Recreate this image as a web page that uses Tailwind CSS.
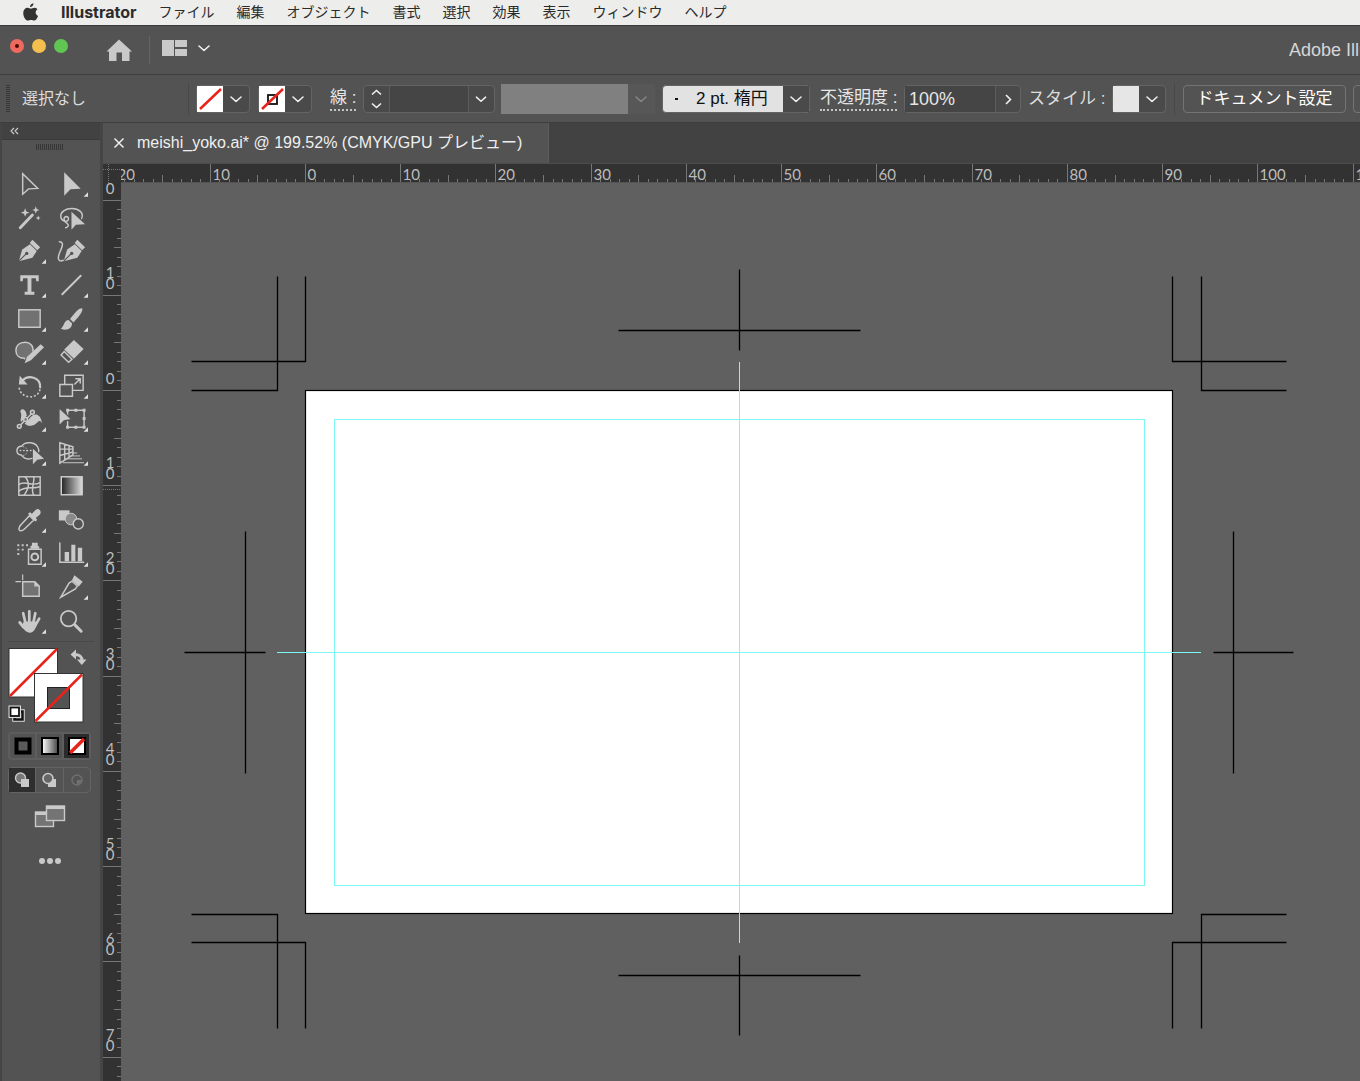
<!DOCTYPE html>
<html lang="ja">
<head>
<meta charset="utf-8">
<title>meishi_yoko.ai</title>
<script src="https://cdn.jsdelivr.net/npm/@tailwindcss/browser@4"></script>
</head>
<body class="h-screen flex flex-col overflow-hidden bg-[#535353] font-['Liberation_Sans','Noto_Sans_CJK_JP',sans-serif] text-[#e6e6e6]">

<svg class="absolute size-0" aria-hidden="true">
  <defs>
    <symbol id="chev" viewBox="0 0 26 26"><path d="M8 11l5 4.500l5-4.500" fill="none" stroke="#f0f0f0" stroke-width="1.600" stroke-linecap="round" stroke-linejoin="round"/></symbol>
    <symbol id="pen" viewBox="0 0 42 34" overflow="visible">
      <path d="M10.500 27L14 15L22 9.500L29 16.500L24.500 23.500Z" fill="#c9c9c9"/>
      <path d="M24.500 5L32.500 12.500L29.500 15.800L21.800 8.200Z" fill="#c9c9c9"/>
      <path d="M10.500 27L18 19.500" stroke="#535353" stroke-width="1.200"/>
      <circle cx="18.700" cy="19" r="1.700" fill="#535353"/>
    </symbol>
    <linearGradient id="gr"><stop offset="0" stop-color="#222"/><stop offset="1" stop-color="#ddd"/></linearGradient>
    <linearGradient id="gw"><stop offset="0" stop-color="#fff"/><stop offset="1" stop-color="#444"/></linearGradient>
  </defs>
</svg>

<!-- macOS menu bar -->
<nav class="flex h-[26px] shrink-0 items-center border-b border-[#3a3a3a] bg-[#ededeb] pb-0.5 pl-[22px] text-sm text-[#2b2b2b]">
  <button aria-label="Apple" class="mr-[22px]"><svg width="17" height="20" viewBox="0 0 17 20" class="block">
    <path d="M11.500 1.200C11.600 3.400 9.800 5.200 8 5.100C7.800 3.200 9.500 1.300 11.500 1.200Z" fill="#333"/>
    <path d="M15.500 7.300C12.800 9 13.200 12.700 16 13.900C15.200 16.300 13.700 18.600 12.200 18.600C11 18.600 10.500 17.900 9 17.900S7 18.600 5.900 18.600C3.700 18.600 1.300 14.900 1.300 11.200C1.300 7.800 3.400 5.800 5.600 5.800C7 5.800 8 6.700 8.900 6.700S11.200 5.600 12.900 5.700C13.900 5.800 14.900 6.300 15.500 7.300Z" fill="#333"/></svg></button>
  <div class="flex items-center gap-[22px] whitespace-nowrap">
    <button class="font-['Inter'] text-base leading-5 font-bold">Illustrator</button>
    <button>ファイル</button><button>編集</button><button>オブジェクト</button><button>書式</button><button>選択</button><button>効果</button><button>表示</button><button>ウィンドウ</button><button>ヘルプ</button>
  </div>
</nav>

<!-- Title bar -->
<header class="flex h-[49px] shrink-0 items-center border-b border-[#3e3e3e] pl-2.5">
  <div class="flex gap-2 pb-2">
    <button aria-label="閉じる" class="grid size-[14px] place-items-center rounded-full bg-[#ee6a5f]"><span class="size-1 rounded-full bg-[#4b0a06]"></span></button>
    <button aria-label="しまう" class="size-[14px] rounded-full bg-[#f5bf4f]"></button>
    <button aria-label="拡大" class="size-[14px] rounded-full bg-[#61c554]"></button>
  </div>
  <button aria-label="ホーム" class="ml-[38px]"><svg width="26" height="24" viewBox="0 0 26 24" class="block"><path d="M13 1.500L26 13.500H23.500V23H16V14.500H10.500V23H3V13.500H0.500Z" fill="#c9c9c9"/></svg></button>
  <div class="ml-[17px] h-7 w-px bg-[#656565]"></div>
  <button aria-label="ワークスペース" class="ml-3 flex items-center pb-1">
    <svg width="25" height="16" viewBox="0 0 25 16"><path d="M0 0H12V16H0ZM13 0H25V7H13ZM13 9H25V16H13Z" fill="#c9c9c9"/></svg>
    <svg width="26" height="26" class="ml-1"><use href="#chev"/></svg>
  </button>
  <div class="ml-auto w-[71px] overflow-hidden text-lg whitespace-nowrap text-[#d6d6d6]">Adobe Illustrator</div>
</header>

<!-- Control bar -->
<section class="flex h-12 shrink-0 items-center overflow-hidden border-b border-[#3e3e3e] pl-1.5 text-[17px] whitespace-nowrap [&>*]:shrink-0">
  <div class="h-7 w-1 bg-[repeating-linear-gradient(#363636_0_1px,#535353_1px_2px)]"></div>
  <div class="ml-3 w-[166px] text-base text-[#dcdcdc]">選択なし</div>
  <div class="h-8 w-px bg-[#484848]"></div>
  <button aria-label="塗り" class="ml-[7px] flex h-7 w-[54px] rounded-sm border border-[#646464] bg-[#4a4a4a]"><svg width="26" height="26" class="bg-white"><path d="M3 23L24 3" stroke="#e8231a" stroke-width="2.500"/></svg><svg width="26" height="26"><use href="#chev"/></svg></button>
  <button aria-label="線の色" class="ml-2 flex h-7 w-[54px] rounded-sm border border-[#646464] bg-[#4a4a4a]"><svg width="26" height="26" class="bg-white"><rect x="9" y="9" width="9" height="9" fill="none" stroke="#111" stroke-width="1.800"/><path d="M3 23L24 3" stroke="#e8231a" stroke-width="2.500"/></svg><svg width="26" height="26"><use href="#chev"/></svg></button>
  <label for="weight" class="ml-[18px] w-[26px] border-b-2 border-dotted border-[#c4c4c4] leading-[22px]">線 :</label>
  <div class="ml-[7px] flex h-7 w-[132px] rounded border border-[#646464] bg-[#4a4a4a]">
    <button aria-label="線幅を増減" class="w-[25px]"><svg width="25" height="26"><path d="M8 8.500L12.500 4.500L17 8.500M8 17.500L12.500 21.500L17 17.500" fill="none" stroke="#f0f0f0" stroke-width="1.600"/></svg></button>
    <input id="weight" class="w-20 border-x border-[#5c5c5c] bg-[#454545] px-1 outline-none">
    <button aria-label="線幅の一覧"><svg width="24" height="26"><use href="#chev"/></svg></button>
  </div>
  <button aria-label="可変線幅プロファイル" disabled class="ml-1.5 flex h-[30px] w-[154px] items-center bg-[#575757]"><span class="h-full w-[127px] bg-[#808080]"></span><svg width="26" height="26" class="opacity-30"><use href="#chev"/></svg></button>
  <div class="relative ml-[7px] h-7 w-[148px]">
    <select aria-label="ブラシ定義" class="h-7 w-full appearance-none rounded-sm border border-[#646464] bg-[#e2e2e2] pl-[33px] text-[17px] text-[#111] outline-none"><option>2 pt. 楕円</option></select>
    <span class="absolute top-[13px] left-[13px] h-0.5 w-[3px] bg-[#111]"></span>
    <svg class="pointer-events-none absolute top-px right-px bg-[#4a4a4a]" width="26" height="26"><use href="#chev"/></svg>
  </div>
  <label for="opacity" class="ml-2.5 w-[77px] border-b-2 border-dotted border-[#c4c4c4] leading-[22px]">不透明度 :</label>
  <div class="ml-[7px] flex h-7 w-[117px] rounded-sm border border-[#646464] bg-[#4a4a4a]">
    <input id="opacity" value="100%" class="w-[91px] border-r border-[#5c5c5c] bg-[#454545] px-1 text-lg outline-none">
    <button aria-label="不透明度スライダー"><svg width="25" height="26"><path d="M10 9L14.500 13.500L10 18" fill="none" stroke="#f0f0f0" stroke-width="1.600"/></svg></button>
  </div>
  <div class="ml-[7px] w-[77px] text-[#dcdcdc]">スタイル :</div>
  <button aria-label="スタイル" class="ml-[7px] flex h-7 w-[54px] rounded-sm border border-[#646464] bg-[#4a4a4a]"><span class="size-[26px] bg-[#e6e6e6]"></span><svg width="26" height="26"><use href="#chev"/></svg></button>
  <div class="ml-2 h-8 w-px bg-[#484848]"></div>
  <button class="ml-2 h-7 w-[163px] rounded border border-[#747474] leading-6 text-white">ドキュメント設定</button>
  <button aria-label="環境設定" class="ml-[7px] h-7 w-24 rounded border border-[#747474]"></button>
</section>

<main class="flex min-h-0 flex-1">
  <!-- Tools panel -->
  <aside class="flex w-[103px] shrink-0 flex-col border-x-2 border-r-3 border-[#454545]">
    <div class="flex h-[17px] items-center border-b border-[#3b3b3b] bg-[#424242] pl-2">
      <button aria-label="折りたたむ"><svg width="9" height="8" class="block"><path d="M4 1L1 4L4 7M8 1L5 4L8 7" fill="none" stroke="#cfcfcf" stroke-width="1.100"/></svg></button>
    </div>
    <div class="mt-1 ml-[34px] h-1.5 w-7 bg-[repeating-linear-gradient(90deg,#363636_0_1px,#535353_1px_2px)]"></div>
    <div id="tools" class="mt-[18px] ml-1.5 grid h-[470px] w-[84px] shrink-0 grid-cols-2 grid-rows-14"></div>
    <div class="mx-1.5 mt-[3px] h-px shrink-0 bg-[#494949]"></div>
    <svg class="shrink-0" width="98" height="90" viewBox="2 642 98 90">
      <rect x="9" y="648.500" width="48.500" height="48.500" fill="#fff" stroke="#333"/>
      <path d="M10 696L57 649" stroke="#e8231a" stroke-width="2.500"/>
      <rect x="34.500" y="673.500" width="48.500" height="48.500" fill="#fff" stroke="#333"/>
      <rect x="47.500" y="687.500" width="22" height="21" fill="#535353" stroke="#222"/>
      <path d="M35.500 721L82 674.500" stroke="#e8231a" stroke-width="2.500"/>
      <path d="M74 654.500C79.500 654.500 82 656 82 661" fill="none" stroke="#c9c9c9" stroke-width="3"/>
      <path d="M76 649.500V659.500L70.500 654.500ZM77 659.500H86.500L81.800 665Z" fill="#c9c9c9"/>
      <rect x="14.500" y="711.500" width="8" height="8" fill="none" stroke="#ddd" stroke-width="4.500"/><rect x="14.500" y="711.500" width="8" height="8" fill="none" stroke="#111" stroke-width="2.500"/>
      <rect x="10.500" y="707.500" width="8.500" height="8.500" fill="#fff" stroke="#ddd" stroke-width="4"/><rect x="10.500" y="707.500" width="8.500" height="8.500" fill="#fff" stroke="#111" stroke-width="1.800"/>
    </svg>
    <div class="ml-1.5 flex h-7 w-[83px] shrink-0 rounded border-2 border-[#5d5d5d]">
      <button aria-label="カラー" class="grid flex-1 place-items-center border-r-2 border-[#5d5d5d]"><svg width="18" height="18"><rect x="2.500" y="2.500" width="13" height="13" fill="#5a5a5a" stroke="#000" stroke-width="4"/></svg></button>
      <button aria-label="グラデーション" class="grid flex-1 place-items-center border-r-2 border-[#5d5d5d]"><svg width="18" height="18"><rect x="1" y="1" width="16" height="16" fill="url(#gw)" stroke="#000" stroke-width="2"/></svg></button>
      <button aria-label="なし" class="grid flex-1 place-items-center bg-[#2b2b2b]"><svg width="18" height="18"><rect x="1" y="1" width="16" height="16" fill="#fff" stroke="#000" stroke-width="2"/><path d="M2 16L16 2" stroke="#e8231a" stroke-width="3.500"/></svg></button>
    </div>
    <div class="mt-[7px] ml-1.5 flex h-[26px] w-[83px] shrink-0 rounded border border-[#646464]">
      <button aria-label="標準描画" class="grid flex-1 place-items-center bg-[#2e2e2e]"><svg width="16" height="16"><circle cx="6.500" cy="6" r="5" fill="#777" stroke="#c9c9c9" stroke-width="1.400"/><rect x="7" y="7" width="8" height="8" fill="#c9c9c9"/></svg></button>
      <button aria-label="背面描画" class="grid flex-1 place-items-center border-x border-[#646464]"><svg width="16" height="16"><rect x="7" y="7" width="8" height="8" fill="#c9c9c9"/><circle cx="7" cy="6.500" r="5" fill="#666" stroke="#c9c9c9" stroke-width="1.600"/></svg></button>
      <button aria-label="内側描画" class="grid flex-1 place-items-center"><svg width="16" height="16"><circle cx="8" cy="8" r="5" fill="none" stroke="#707070" stroke-width="1.400"/><path d="M8 8H12.500A5 5 0 0 1 8 12.500Z" fill="#707070"/></svg></button>
    </div>
    <button aria-label="スクリーンモード" class="mt-[11px] ml-8 w-8 shrink-0"><svg width="32" height="25" class="block"><g fill="#747474" stroke="#c9c9c9" stroke-width="1.400"><rect x="1.500" y="8" width="18" height="14.500"/><path d="M1.500 9.500H19.500" stroke-width="3"/><rect x="12.500" y="2" width="18" height="14.500"/><path d="M12.500 3.500H30.500" stroke-width="3"/></g></svg></button>
    <button aria-label="ツールバーを編集" class="mt-7 ml-9 flex shrink-0 gap-0.5 p-px"><span class="size-[6px] rounded-full bg-[#c9c9c9]"></span><span class="size-[6px] rounded-full bg-[#c9c9c9]"></span><span class="size-[6px] rounded-full bg-[#c9c9c9]"></span></button>
  </aside>

  <!-- Document window -->
  <section class="flex min-w-0 flex-1 flex-col">
    <div class="flex h-10 shrink-0 bg-[#424242]">
      <div class="flex w-[446px] items-center gap-3 border-r border-[#5c5c5c] bg-[#535353] pl-2.5 text-base whitespace-nowrap text-[#efefef]">
        <button aria-label="タブを閉じる"><svg width="12" height="12" class="block"><path d="M1.500 1.500L10.500 10.500M10.500 1.500L1.500 10.500" stroke="#efefef" stroke-width="1.500"/></svg></button>
        <span>meishi_yoko.ai* @ 199.52% (CMYK/GPU プレビュー)</span>
      </div>
    </div>
    <div class="grid min-h-0 flex-1 grid-cols-[18px_1fr] grid-rows-[19px_1fr] border-t border-[#4c4c4c] bg-[#323232] font-['Lato'] text-[15px]">
      <svg class="h-full w-full"><path d="M0 5.500H18M5.500 0V19" stroke="#777" stroke-dasharray="1 1"/></svg>
      <svg id="hr" class="h-full w-full overflow-hidden border-b border-[#555]"></svg>
      <svg id="vr" class="h-full w-full overflow-hidden"></svg>
      <svg class="h-full w-full overflow-hidden bg-[#606060]" role="img" aria-label="名刺アートボード">
        <g transform="translate(184.500 207.500)" fill="none">
          <rect x="0" y="0" width="867" height="523" fill="#fff" stroke="#000" stroke-width="1.200"/>
          <g stroke="#000" stroke-width="1.300">
            <path d="M-28-114V0H-114M0-114V-29H-114"/>
            <path d="M896-114V0H981M867-114V-29H981"/>
            <path d="M-28 638V524H-114M0 638V552H-114"/>
            <path d="M896 638V524H981M867 638V552H981"/>
            <path d="M434-121V-40M313-60H555M434 565V645M313 585H555"/>
            <path d="M-60 141V383M-121 262H-40M928 141V383M908 262H988"/>
          </g>
          <rect x="29" y="29" width="810" height="466" stroke="#7df7f4"/>
          <rect x="433.500" y="-28.500" width="1" height="581" fill="#7df7f4"/>
          <rect x="-28.500" y="261.500" width="924" height="1" fill="#7df7f4"/>
        </g>
      </svg>
    </div>
  </section>
</main>

<script>
// Tool icons: [label, has flyout triangle, artwork in a 42x34 cell]
const tools = [
['選択',0,'<path d="M14.500 6V27L20.500 21.500L30 21Z" class="o"/>'],
['ダイレクト選択',1,'<path d="M14 4.500V28.500L20.500 22L31 21.500Z" class="f"/>'],
['自動選択',0,'<path d="M12 26.500L24.500 13.500" class="o" stroke-width="3"/><path d="M17 6.500L18.300 9.800L21.500 11L18.300 12L17 15.300L15.800 12L12.500 11L15.800 9.800ZM28 4.500L29 7.200L31.700 8.300L29 9.300L28 12L27 9.300L24.500 8.300L27 7.200ZM30.500 14L31.200 15.800L33 16.500L31.200 17.200L30.500 19L29.800 17.200L28 16.500L29.800 15.800Z" class="f"/>'],
['なげなわ',0,'<path d="M32 17C34.500 11 29 6.800 22 6.800C15 6.800 10 10.500 10.500 15C10.800 18 13 19.500 15.500 19.800C19 20 19.500 15 16 15C13 15.500 13 20 17 22C19 23.500 18.500 26 15.500 26.500" class="o"/><path d="M21.500 10V28.500L26 23.500L35.500 23Z" class="f"/>'],
['ペン',1,'<use href="#pen"/>'],
['曲線',0,'<use href="#pen" x="3"/><path d="M9 7C15 7 11 14 9 19C7 24 8 28.500 13 26" class="o"/>'],
['文字',1,'<path d="M12 6.500H31V12.500H28.500L28 9.500H23.500V23.500H26.500V26.500H16.500V23.500H19.500V9.500H15L14.500 12.500H12Z" class="f"/>'],
['直線',1,'<path d="M12 26L31 7" class="o" stroke-width="2"/>'],
['長方形',1,'<rect x="10.500" y="7" width="22" height="18" class="g"/>'],
['ブラシ',1,'<path d="M32.500 5.500C30 5 27 7.500 20 16.500L23.500 20C31 12.500 33.500 8 32.500 5.500ZM18.500 17.500C14 17.500 14.500 23 10.500 26.500C16 29 22.500 26.500 22 20.800Z" class="f"/>'],
['ブロブブラシ',1,'<path d="M25 16C26 10 22 6.500 17 6.500C11 6.500 7.500 10 7.500 15C7.500 20 11 23 16 23L17 24" class="g"/><path d="M33 8.500L36.500 11.500L23 25L16.500 28L19 21.500Z" class="f"/>'],
['消しゴム',1,'<path d="M24 4L34 13.500L24 23.500L14 14Z" class="f"/><path d="M14 16L22 24L18.500 27L10.800 19.500Z" class="o"/>'],
['回転',1,'<path d="M14 11C20 4.500 33 7 32.500 18" class="o" stroke-width="2.200"/><path d="M11.500 6L10.500 15H19.500Z" class="f"/><path d="M11 19C13 30 31 31 32.500 19" class="o" stroke-dasharray="0.500 3.500" stroke-width="1.800"/>'],
['拡大・縮小',1,'<path d="M14.500 15V5.500H33.500V21H23M9.500 15H22.500V27H9.500Z" class="o"/><path d="M25 14.500L30 9.500M26 9H30.500V13.500" class="o"/>'],
['線幅',1,'<path d="M12 8.500C13 5 17 6 18 10C19 14 20 16 23 14C27 10 33 11 34.500 21C31 15 30 22 25 23C19 25 18 21 14 20C10 19 15 14 12 8.500Z" class="f"/><path d="M12 23.500L24.500 9.500" stroke="#535353" stroke-width="4"/><path d="M12 23L24.500 10" class="o"/><g class="g"><circle cx="11" cy="24" r="2"/><circle cx="24.500" cy="9.500" r="2"/><circle cx="17.500" cy="17" r="2"/></g>'],
['自由変形',1,'<rect x="17.500" y="7.500" width="17" height="17.500" class="o"/><path d="M16 6h3v3h-3zM24.500 6h3v3h-3zM33 6h3v3h-3zM33 14.500h3v3h-3zM33 23.500h3v3h-3zM24.500 23.500h3v3h-3zM16 23.500h3v3h-3z" class="f"/><path d="M8.500 4.500V24L14 18.500L22 17Z" class="f" stroke="#535353"/>'],
['シェイプ形成',1,'<path d="M24 22C17 24 14 20 13 18.500C6.500 18.500 7.500 9 13.500 9.500C17 4 29 4.500 31 13V15" class="o"/><path d="M12 14H23" class="o" stroke-dasharray="0.500 3"/><path d="M15 10C20 10 20 19 15 19" class="o" stroke-dasharray="0.500 2.500" stroke-width="1"/><path d="M25 12V28L29.500 23.500L36.500 22.500Z" class="f"/>'],
['遠近グリッド',1,'<path d="M9.500 6V27L23 18.500V10ZM14.500 8V23.500M19 9V21M9.500 12.500L23 12.500M9.500 19L23 15.500" class="o"/><path d="M23 16.500H27M21 19.500H30M17 22.500H32M13 26.500H34" class="o" stroke-width="1"/>'],
['メッシュ',0,'<rect x="10.500" y="7" width="22" height="19" class="o"/><path d="M10.500 15C17 10 24 18 32.500 13M10.500 22C16 16 26 20 32.500 17M17 7C23 14 20 20 16 26M26 7C27 13 22 20 26 26" class="o"/>'],
['グラデーション',0,'<rect x="11" y="7" width="21.500" height="18.500" fill="url(#gr)" stroke="#d0d0d0" stroke-width="1.500"/>'],
['スポイト',1,'<path d="M21.500 12L26 16.500L16 26C14 28 10 28.500 10.800 25C11 23 12 22 13 21Z" class="o"/><path d="M20 10L22 8.500L24 10L28 6C31 3.500 35 8 32 11L28 14.500L29.500 16.500L27.500 18Z" class="f"/>'],
['ブレンド',0,'<path d="M8.500 6.500H19.500V17H8.500Z" class="f"/><circle cx="21" cy="15.500" r="6" fill="#8a8a8a" stroke="#c9c9c9" stroke-width="1"/><circle cx="28.500" cy="20.500" r="5.200" fill="#535353" stroke="#c9c9c9"/>'],
['シンボルスプレー',1,'<path d="M20.500 11.500H33.500V27H20.500Z" class="o" stroke-width="1.500"/><circle cx="27" cy="19.500" r="3.500" class="o" stroke-width="2"/><path d="M24 5H30V8.500H31.500V11H22.500V8H24ZM9 6.500h2v2h-2zM13.500 6.500h2v2h-2zM18 6.500h2v2h-2zM9 11h2v2h-2zM13.500 11h2v2h-2zM9 15.500h2v2h-2z" class="f"/>'],
['棒グラフ',1,'<path d="M9.500 5V25H34" class="o"/><path d="M14.500 14.500H19V24H14.500ZM21.300 7H25.500V24H21.300ZM28 10H32.500V24H28Z" class="f"/>'],
['アートボード',0,'<path d="M14.500 11H27L31.500 15.500V26H14.500Z" class="g"/><path d="M26.500 10.500V16H32Z" class="f"/><path d="M14.500 4V9M7.500 11H12.500" class="o" stroke-width="1.200"/>'],
['スライス',1,'<path d="M10.500 27L19 12.500L22 10.500L27.500 15.500L25.500 18.500Z" class="o"/><path d="M24.500 4.500L33 11L29 16L22 9.500Z" class="f"/>'],
['手のひら',1,'<path d="M15.500 23L11.500 18" class="o" stroke-width="3"/><path d="M17.500 19L15 8.500M21.300 18V6.500M25.500 18L27.500 8.500M27.500 21L31.500 14" class="o" stroke-width="2.800"/><path d="M15.500 17H28L29 21C27 25 26 28 22 28.500C18 28.500 16 26 14 22Z" class="f"/>'],
['ズーム',0,'<circle cx="18.500" cy="14" r="8" class="o" stroke-width="1.800"/><path d="M25 20.500L31.500 27" class="o" stroke-width="3"/>'],
];
const art = s => s
  .replace(/class="o"/g, 'fill="none" stroke="#c9c9c9" stroke-linecap="round"')
  .replace(/class="f"/g, 'fill="#c9c9c9"')
  .replace(/class="g"/g, 'fill="#727272" stroke="#c9c9c9"');
document.getElementById('tools').innerHTML = tools.map(([n, fly, s]) =>
  `<button aria-label="${n}ツール"><svg width="42" height="33" viewBox="0 0 42 34" stroke-width="1.500">${art(s)}${fly ? '<path d="M38.500 25V29.500H34Z" fill="#e0e0e0"/>' : ''}</svg></button>`).join('');

// Rulers: one tick per millimetre, drawn only as far as the window reaches
const mm = 9.524;
const hr = document.getElementById('hr'), vr = document.getElementById('vr');
function drawRulers() {
  const w = window.innerWidth - 121, t = window.innerHeight - 183;
  const tick = d => `<path d="${d}" stroke="#777"/>`;
  let h = '', v = '';
  for (let i = -20; 184.5 + i * mm < w; i++) {
    const x = Math.floor(184.5 + i * mm) + 0.5;
    h += tick(`M${x} ${i % 10 === 0 ? 0 : i % 5 === 0 ? 11 : 15}V19`);
    if (i % 10 === 0) h += `<text x="${x + 2}" y="16" fill="#bdbdbd">${Math.abs(i)}</text>`;
  }
  for (let i = -20; 207.5 + i * mm < t; i++) {
    const y = Math.floor(207.5 + i * mm) + 0.5;
    v += tick(`M${i % 10 === 0 ? 0 : i % 5 === 0 ? 11 : 14} ${y}H18`);
    if (i % 10 === 0) {
      const d = i === -20 ? '0' : String(Math.abs(i));
      [...d].reverse().forEach((c, k) => { v += `<text x="7" y="${y - 7 - 11 * k}" text-anchor="middle" fill="#bdbdbd">${c}</text>`; });
    }
  }
  v += '<path d="M0 306.500H18" stroke="#777" stroke-dasharray="1 1"/>';
  hr.innerHTML = h;
  vr.innerHTML = v;
}
drawRulers();
addEventListener('resize', drawRulers);
</script>
</body>
</html>
